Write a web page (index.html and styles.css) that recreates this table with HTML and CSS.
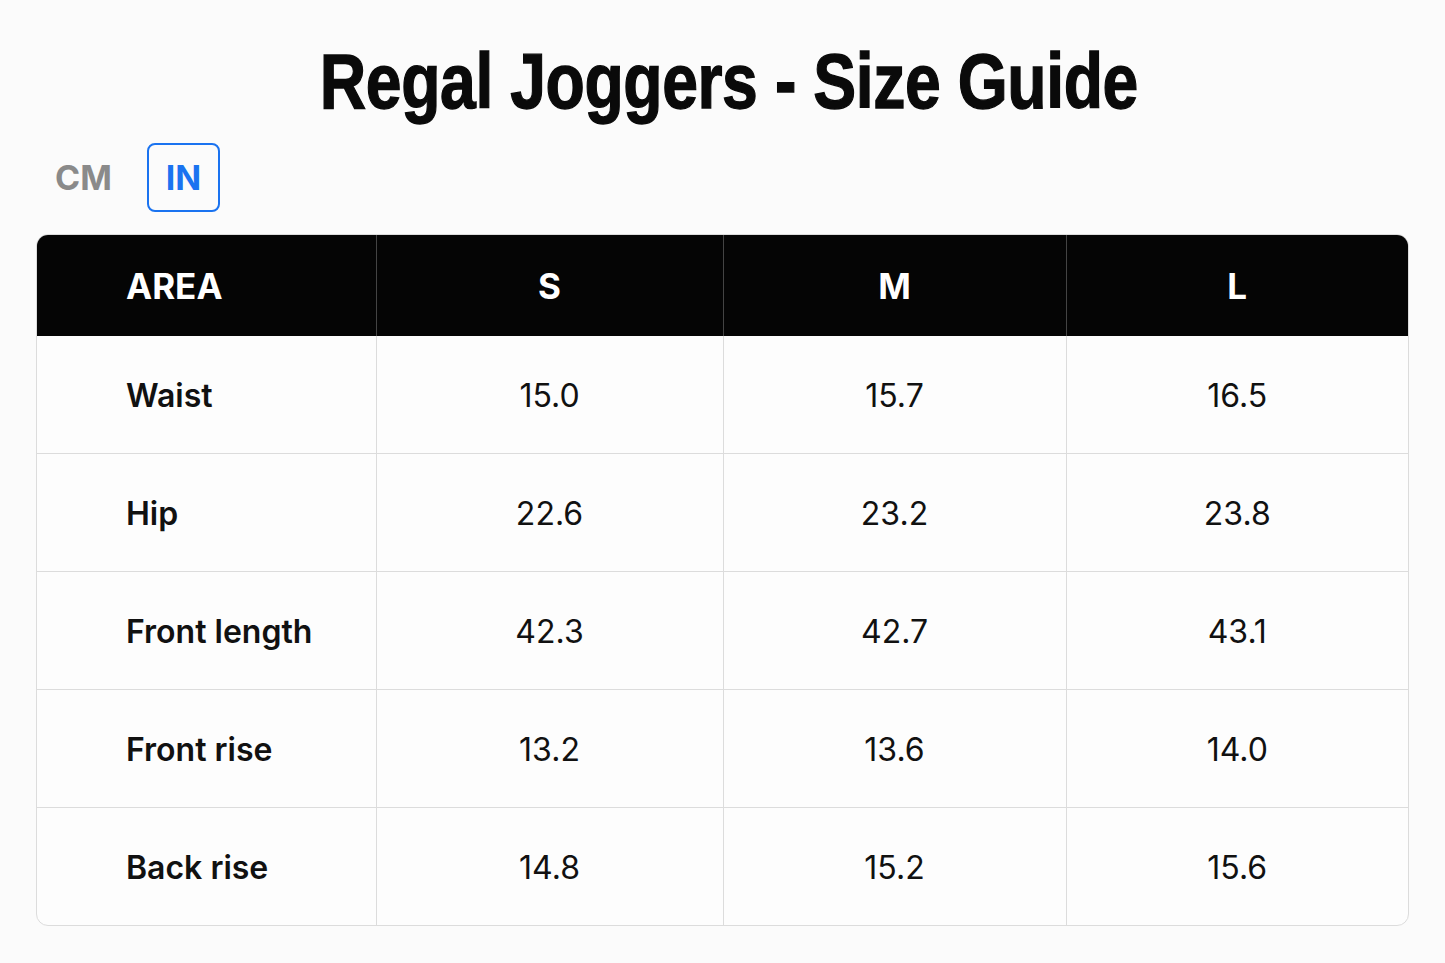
FILE: index.html
```html
<!DOCTYPE html>
<html lang="en">
<head>
<meta charset="utf-8">
<title>Regal Joggers - Size Guide</title>
<link rel="stylesheet" href="styles.css">
</head>
<body>
<main class="page">
  <h1 class="title"><span class="title-text">Regal Joggers - Size Guide</span></h1>
  <div class="units">
    <button class="unit">CM</button>
    <button class="unit unit-active">IN</button>
  </div>
  <div class="table-wrap">
    <table class="sizes">
      <colgroup>
        <col class="c-area">
        <col class="c-s">
        <col class="c-m">
        <col class="c-l">
      </colgroup>
      <thead>
        <tr>
          <th class="area">AREA</th>
          <th>S</th>
          <th>M</th>
          <th>L</th>
        </tr>
      </thead>
      <tbody>
        <tr><td class="area">Waist</td><td>15.0</td><td>15.7</td><td>16.5</td></tr>
        <tr><td class="area">Hip</td><td>22.6</td><td>23.2</td><td>23.8</td></tr>
        <tr><td class="area">Front length</td><td>42.3</td><td>42.7</td><td>43.1</td></tr>
        <tr><td class="area">Front rise</td><td>13.2</td><td>13.6</td><td>14.0</td></tr>
        <tr><td class="area">Back rise</td><td>14.8</td><td>15.2</td><td>15.6</td></tr>
      </tbody>
    </table>
  </div>
</main>
</body>
</html>
```

FILE: styles.css
```css
html, body {
  margin: 0;
  padding: 0;
  background: #fbfbfb;
}

body {
  font-family: Inter, "Liberation Sans", sans-serif;
  color: #111;
}

.page {
  padding: 35px 36px 0 36px;
}

.title {
  margin: 0;
  padding-left: 12px;
  font-family: "Liberation Sans", Arial, sans-serif;
  font-weight: 700;
  font-size: 77px;
  line-height: 92px;
  text-align: center;
  color: #0a0a0a;
  letter-spacing: -0.5px;
}

.title-text {
  display: inline-block;
  transform: scaleX(0.835);
  transform-origin: center;
  -webkit-text-stroke: 1.3px #0a0a0a;
}

.units {
  display: flex;
  gap: 16px;
  margin-top: 16px;
  height: 69px;
}

.unit {
  font-family: Inter, "Liberation Sans", sans-serif;
  font-weight: 700;
  font-size: 34px;
  background: transparent;
  border: 2.5px solid transparent;
  border-radius: 8px;
  color: #8a8a8a;
  width: 95px;
  height: 69px;
  padding: 0;
  text-align: center;
}

.unit-active {
  width: 73px;
  color: #1a73f0;
  border-color: #1a73f0;
}

.table-wrap {
  margin-top: 22px;
  border: 1px solid #dcdcdc;
  border-radius: 12px;
  overflow: hidden;
  background: #fdfdfd;
}

.sizes {
  width: 100%;
  border-collapse: collapse;
  table-layout: fixed;
}

.c-area { width: 339px; }
.c-s { width: 347px; }
.c-m { width: 343px; }
.c-l { width: auto; }

.sizes th {
  background: #050505;
  color: #fff;
  font-weight: 700;
  font-size: 35px;
  height: 101px;
  padding: 0;
  text-align: center;
  border-left: 1px solid #444;
}

.sizes td {
  height: 115px;
  padding: 2px 0 0 0;
  text-align: center;
  font-size: 32px;
  font-weight: 400;
  color: #111;
  border-left: 1px solid #dcdcdc;
  border-top: 1px solid #dcdcdc;
}

.sizes tbody tr:first-child td {
  border-top: none;
}

.sizes th:first-child,
.sizes td:first-child {
  border-left: none;
}

.sizes .area {
  text-align: left;
  padding-left: 89px;
}

.sizes td.area {
  font-weight: 600;
}
```
